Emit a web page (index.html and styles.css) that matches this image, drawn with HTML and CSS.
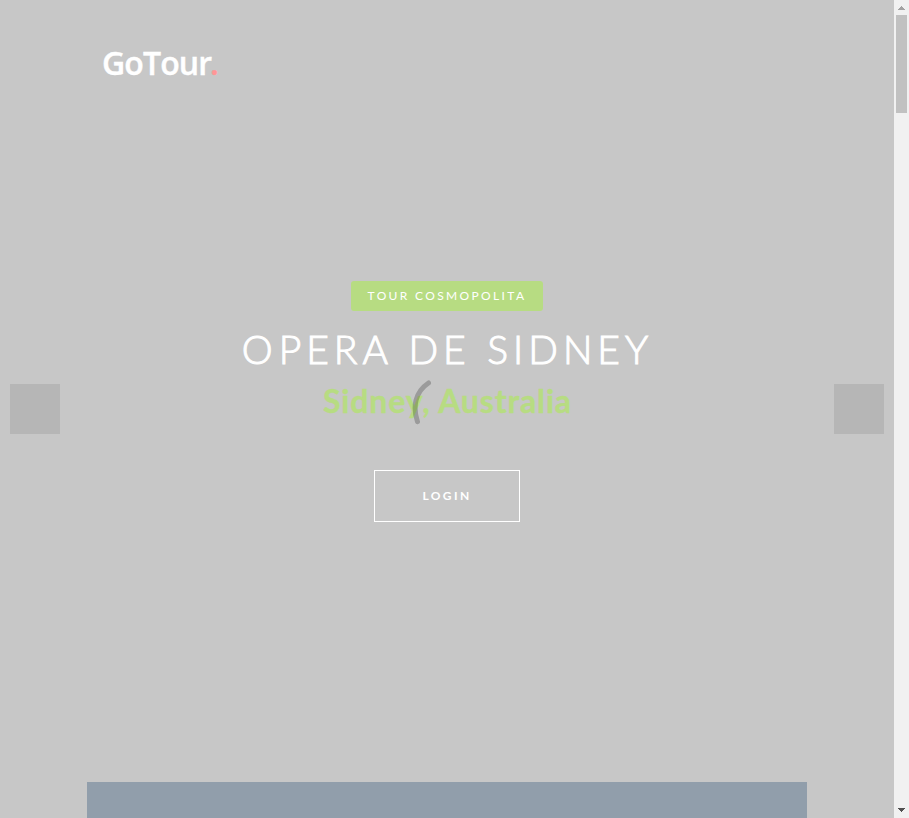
FILE: index.html
```html
<!DOCTYPE html>
<html lang="es">
<head>
<meta charset="utf-8">
<title>GoTour</title>
<link rel="stylesheet" href="styles.css">
</head>
<body>
<div class="page">
  <header class="header"><a class="logo">GoTour<span class="dot">.</span></a></header>
  <main class="slider">
    <button class="nav" aria-label="Anterior"></button>
    <section class="slide">
      <span class="tag">TOUR COSMOPOLITA</span>
      <h1 class="title">OPERA DE SIDNEY</h1>
      <h2 class="place">Sidney, Australia</h2>
      <a class="login">LOGIN</a>
    </section>
    <button class="nav" aria-label="Siguiente"></button>
  </main>
  <div class="panel"></div>
  <svg class="loader" viewBox="0 0 70 70"><path d="M16.500 7C3 16 .5 31 5.500 45.700"/></svg>
</div>
<aside class="scrollbar">
  <svg class="arrow up" viewBox="0 0 7 4"><path d="M3 0h1v1h1v1h1v1h1v1H0V3h1V2h1V1h1z"/></svg>
  <div class="thumb"></div>
  <svg class="arrow down" viewBox="0 0 7 4"><path d="M0 0h7v1H6v1H5v1H4v1H3V3H2V2H1V1H0z"/></svg>
</aside>
</body>
</html>
```
FILE: styles.css
```css
* { box-sizing: border-box; }
body {
  margin: 0;
  height: 818px;
  display: flex;
  overflow: hidden;
  background: #c7c7c7;
  font-family: Lato, sans-serif;
  color: #fff;
}
.page {
  position: relative;
  width: 894px;
  display: flex;
  flex-direction: column;
}
.header { height: 128px; padding: 39px 102px; }
.logo {
  font: 600 32px/48px "Open Sans", sans-serif;
  letter-spacing: -0.9px;
  -webkit-text-stroke: 0.4px;
}
.dot { color: #ff9696; margin-left: -1px; }
.slider {
  height: 654px;
  padding: 0 10px;
  display: flex;
  justify-content: space-between;
}
.nav {
  width: 50px;
  height: 50px;
  margin-top: 256px;
  padding: 0;
  border: 0;
  background: #b6b6b6;
}
.slide {
  display: flex;
  flex-direction: column;
  align-items: center;
  padding-top: 153px;
}
.tag {
  width: 192px;
  height: 30px;
  border-radius: 3px;
  background: #b7dc82;
  font-size: 12px;
  line-height: 30px;
  letter-spacing: 2.35px;
  text-align: center;
  white-space: nowrap;
}
.title {
  margin: 14px 0 0;
  padding-left: 1px;
  font-size: 39px;
  font-weight: 300;
  line-height: 48px;
  letter-spacing: 5px;
  word-spacing: 1px;
  -webkit-text-stroke: 1px #fff;
  white-space: nowrap;
}
.title::first-letter { letter-spacing: 6px; }
.place {
  margin: 6px 0 0;
  padding-left: 1px;
  color: #b7dc82;
  font-size: 32px;
  font-weight: 700;
  line-height: 44px;
  letter-spacing: 0.85px;
  -webkit-text-stroke: 0.4px #b7dc82;
  white-space: nowrap;
}
.login {
  width: 146px;
  height: 52px;
  margin-top: 47px;
  border: 1px solid #fff;
  font-size: 12px;
  font-weight: 700;
  line-height: 50px;
  letter-spacing: 2.4px;
  text-align: center;
}
.panel { width: 720px; height: 36px; margin: 0 auto; background: #919eab; }
.loader {
  position: absolute;
  left: 412px;
  top: 376px;
  width: 70px;
  height: 70px;
  fill: none;
  stroke: rgba(0, 0, 0, .22);
  stroke-width: 5;
  stroke-linecap: round;
}
.scrollbar {
  width: 15px;
  padding: 6px 2px;
  display: flex;
  flex-direction: column;
  align-items: center;
  background: #f1f1f1;
}
.arrow { width: 7px; height: 4px; shape-rendering: crispEdges; }
.up { fill: #a3a3a3; }
.down { margin-top: auto; fill: #505050; }
.thumb { width: 11px; height: 98px; margin-top: 5px; background: #c1c1c1; }
```
